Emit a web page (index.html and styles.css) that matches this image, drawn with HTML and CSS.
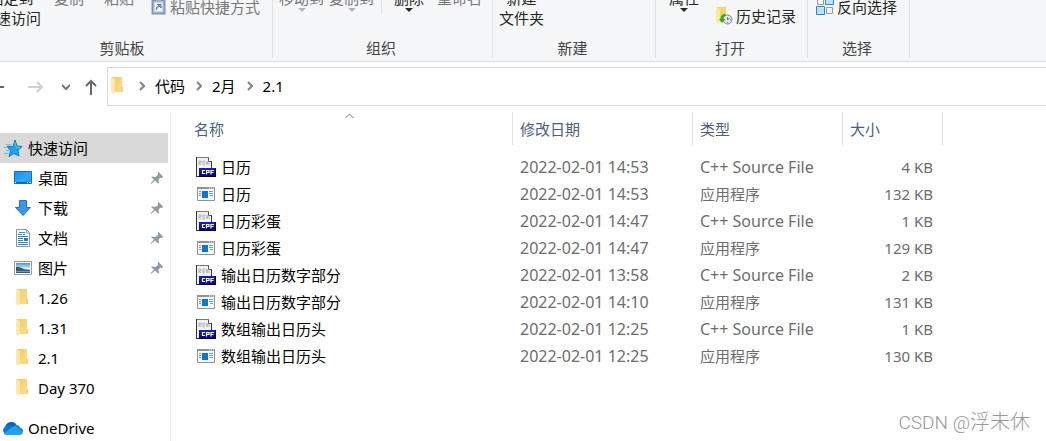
FILE: index.html
```
<!DOCTYPE html>
<html lang="zh-CN">
<head>
<meta charset="utf-8">
<title>2.1</title>
<link rel="stylesheet" href="styles.css">
</head>
<body>
<svg class="sprite" aria-hidden="true">
  <defs>
    <linearGradient id="gold" x1="0" y1="0" x2="1" y2="1"><stop offset="0" stop-color="#efcb68"/><stop offset="1" stop-color="#ffe08a"/></linearGradient>
    <linearGradient id="blue" x1="0" y1="0" x2="1" y2="1"><stop offset="0" stop-color="#1390f4"/><stop offset=".6" stop-color="#35a5fa"/><stop offset="1" stop-color="#1593f5"/></linearGradient>
    <linearGradient id="sky" x1="0" y1="0" x2="0" y2="1"><stop offset="0" stop-color="#4b93d8"/><stop offset=".55" stop-color="#d5ecf5"/><stop offset="1" stop-color="#557f91"/></linearGradient>
    <linearGradient id="navy" x1="0" y1="0" x2="0" y2="1"><stop offset="0" stop-color="#1d1dcb"/><stop offset="1" stop-color="#000074"/></linearGradient>
  </defs>
  <symbol id="folder" viewBox="0 0 20 20"><path d="M4 1h10v10h1v5H4z" fill="url(#gold)"/><path d="M3 1l4 2v12l-1 3-3-2z" fill="#ffe9a9"/><path d="M14 11v5" stroke="#eec763"/></symbol>
  <symbol id="cpp" viewBox="0 0 20 20"><path d="M0 0h13l3 4v15H0z" fill="#f2f2f2"/><path d="M0 .5h13" stroke="#777"/><path d="M.5 0v20M0 19.500h4" stroke="#333" fill="none"/><path d="M12.500 1v3.500H16" fill="#fff" stroke="#555"/><path d="M15.500 5v6" stroke="#333"/><path d="M3 8V4h2v2H3l2 2M9 4H7v4h2M7 6h2M10 4l1 4 1-4M13 5v3" fill="none" stroke="#b5b5b5"/><path d="M3 11h17v9H3z" fill="url(#navy)"/><path d="M3 19.500h16.500V11" fill="none" stroke="#000039"/><path d="M9 13.500H6.500v3H9M10.500 17.500v-4H13v2h-2.500M15 17.500v-4h3M15 15.500h2.500" fill="none" stroke="#fff" stroke-width="1.200"/></symbol>
  <symbol id="app" viewBox="0 0 20 20"><path d="M1.500 3.500h17v13h-17z" fill="#f7f7f7" stroke="#8c949a"/><path d="M1 3h18v2H1z" fill="#8c949a"/><path d="M13 4h1M15 4h1M17 4h1" stroke="#fff"/><path d="M6 7h6v7H6z" fill="#0078d7"/><path d="M3 7.500h2M3 9.500h2M3 11.500h2M13 7.500h4M13 9.500h4M14 11.500h3" stroke="#8d969c"/></symbol>
  <symbol id="star" viewBox="0 0 20 20"><path d="M12 2l2 6 5 .5-4 4 1 5.500-5-2.500-5 3 1.500-6-3.500-4h6z" fill="#1ba4f1" stroke="#1477bd"/><path d="M3 6.500h5M1 9.500h4M3 12.500h3M1 15.500h4" stroke="#68b9ea"/><path d="M12 4l1 5 4 .5" fill="none" stroke="#54c6ff"/></symbol>
  <symbol id="desktop" viewBox="0 0 20 20"><path d="M1.500 3.500h17v12h-17z" fill="url(#blue)" stroke="#0872c4"/><path d="M2 14.500h16" stroke="#0967ae"/><path d="M2 14.500h1M14 14.500h1M16 14.500h2" stroke="#fff"/></symbol>
  <symbol id="download" viewBox="0 0 20 20"><path d="M6.500 2.500h7v7h4L10 17.500 2.500 9.500h4z" fill="#3b98e9" stroke="#2673bd"/></symbol>
  <symbol id="document" viewBox="0 0 20 20"><path d="M3.500 1.500h10l3 3v14h-13z" fill="#fff" stroke="#8b969e"/><path d="M13.500 2v3h3" fill="none" stroke="#8b969e"/><path d="M6 4.500h6M5 6.500h4M10 6.500h2" stroke="#2794df"/><path d="M5 8.500h10M5 10.500h5M5 12.500h5M5 14.500h10M5 16.500h10" stroke="#2c83c5"/><path d="M11 10h4v3h-4z" fill="#47738f"/></symbol>
  <symbol id="picture" viewBox="0 0 20 20"><path d="M1.500 3.500h17v13h-17z" fill="#fff" stroke="#92999e"/><path d="M3 5h14v10H3z" fill="url(#sky)"/><path d="M3 9c4-1 6 3 14 3v3H3z" fill="#365f62"/><path d="M3 13.500h14" stroke="#68a0c5"/></symbol>
  <symbol id="cloud" viewBox="0 0 20 20"><path d="M2 9c1-3 3-5 6-5 3-.3 5 1 6 4l-5 5z" fill="#0a64b5"/><path d="M5 8c3-1 4 0 6 2l-8 6C-1 15-1 9 4 8z" fill="#0a78d0"/><path d="M10 9c3-3 6-2 7 1 5 1 3 7 0 7H4c-2 0-3-1-3-2z" fill="#25a1e9"/><path d="M12 8c2-2 5 0 5 2 2 0 3 2 3 4z" fill="#1683d5"/></symbol>
  <symbol id="pin" viewBox="0 0 14 14"><path d="M8.500 1L13 5.500 12 7l-2-.3-1.500 2L9 12l-1 .5-3-3L1 13l-.5-.5L4 8.500l-2.500-2V5.500L5.500 6l2.500-2V1z" fill="#8f9aa3"/></symbol>
</svg>

<header class="ribbon">
  <section class="group group-clipboard">
    <div class="tools">
      <button class="big pin-quick">固定到<br>快速访问</button>
      <button class="big muted copy">复制<br>&nbsp;</button>
      <button class="big muted paste">粘贴<br>&nbsp;</button>
      <button class="small muted high shortcut"><svg class="icon-16" viewBox="0 0 16 18"><path d="M1.500 2.500h12v13h-12z" fill="#c5d3e8" stroke="#8496b8" stroke-width="2"/><path d="M5 0h5v3H5z" fill="#9eafc9"/><path d="M4 5h7v8H4z" fill="#f5f9ff"/><path d="M5.500 12c-.5-3 1-4 3-4M6.500 6.500H10V10z" fill="#526e9b" fill-opacity=".4" stroke="#526e9b"/></svg>粘贴快捷方式</button>
    </div>
    <h2>剪贴板</h2>
  </section>
  <section class="group group-organize">
    <div class="tools">
      <button class="big muted">移动到<br><i class="caret"></i></button>
      <button class="big muted">复制到<br><i class="caret"></i></button>
      <span class="divider"></span>
      <button class="big delete">删除<br><i class="caret"></i></button>
      <button class="big muted rename">重命名<br>&nbsp;</button>
    </div>
    <h2>组织</h2>
  </section>
  <section class="group group-new">
    <div class="tools"><button class="big">新建<br>文件夹</button></div>
    <h2>新建</h2>
  </section>
  <section class="group group-open">
    <div class="tools">
      <button class="big">属性<br><i class="caret"></i></button>
      <button class="small history"><svg class="icon-18" viewBox="0 0 18 18"><path d="M1 0h10v15H3z" fill="#f7d474"/><path d="M1 0l4 2v12l-1 3-3-2z" fill="#ffe7a2"/><circle cx="12.500" cy="12.500" r="4.500" fill="#e5e7e8" stroke="#858b8d"/><path d="M12.500 10v3l2-2M9.500 13h1M12.500 15v1M15 13h1" fill="none" stroke="#777"/><path d="M10.500 7C7 7 5.500 9 5.500 12H4l3 4 3-4H8c0-2 1-3 3-3z" fill="#2fac28"/></svg>历史记录</button>
    </div>
    <h2>打开</h2>
  </section>
  <section class="group group-select">
    <div class="tools"><button class="small high"><svg class="icon-18" viewBox="0 0 18 18"><path d="M1.500 1.500h6v5h-6zM10.500 9.500h6v6h-6z" fill="#f5f5f5" stroke="#999"/><path d="M9.500-.5h8v7h-8zM.5 8.500h8v8h-8z" fill="#b9e4ff" stroke="#2589d5"/></svg>反向选择</button></div>
    <h2>选择</h2>
  </section>
</header>

<nav class="address">
  <div class="history-nav">
    <button aria-label="后退"><svg viewBox="0 0 16 16"><path d="M1 8h15M8 2L2 8l6 6" stroke="#666"/></svg></button>
    <button aria-label="前进" disabled><svg viewBox="0 0 16 16"><path d="M0 8h14M9 3l5 5-5 5" stroke="#d0d0d0"/></svg></button>
    <button aria-label="最近" class="recent"><svg viewBox="0 0 8 16"><path d="M0 6l4 4 4-4" stroke="#777"/></svg></button>
    <button aria-label="向上" class="up"><svg viewBox="0 0 12 16"><path d="M6 16V2M1 7l5-5 5 5" stroke="#686868"/></svg></button>
  </div>
  <div class="crumbs">
    <svg class="icon-20"><use href="#folder"/></svg>
    <svg class="chevron" viewBox="0 0 6 10"><path d="M1 1l4 4-4 4"/></svg><a href="#">代码</a>
    <svg class="chevron" viewBox="0 0 6 10"><path d="M1 1l4 4-4 4"/></svg><a href="#">2月</a>
    <svg class="chevron" viewBox="0 0 6 10"><path d="M1 1l4 4-4 4"/></svg><a href="#">2.1</a>
  </div>
</nav>

<div class="body">
  <aside class="tree">
    <a href="#" class="root selected"><svg class="icon-20"><use href="#star"/></svg>快速访问</a>
    <a href="#"><svg class="icon-20"><use href="#desktop"/></svg>桌面<svg class="pin"><use href="#pin"/></svg></a>
    <a href="#"><svg class="icon-20"><use href="#download"/></svg>下载<svg class="pin"><use href="#pin"/></svg></a>
    <a href="#"><svg class="icon-20"><use href="#document"/></svg>文档<svg class="pin"><use href="#pin"/></svg></a>
    <a href="#"><svg class="icon-20"><use href="#picture"/></svg>图片<svg class="pin"><use href="#pin"/></svg></a>
    <a href="#"><svg class="icon-20"><use href="#folder"/></svg>1.26</a>
    <a href="#"><svg class="icon-20"><use href="#folder"/></svg>1.31</a>
    <a href="#"><svg class="icon-20"><use href="#folder"/></svg>2.1</a>
    <a href="#"><svg class="icon-20"><use href="#folder"/></svg>Day 370</a>
    <a href="#" class="root cloud"><svg class="icon-20"><use href="#cloud"/></svg>OneDrive</a>
  </aside>
  <main class="files">
    <table>
      <colgroup><col class="col-name"><col class="col-date"><col class="col-type"><col class="col-size"></colgroup>
      <thead><tr><th>名称<svg class="sort" viewBox="0 0 10 6"><path d="M1 5l4-4 4 4"/></svg></th><th>修改日期</th><th>类型</th><th>大小</th></tr></thead>
      <tbody>
        <tr><td><svg class="icon-20"><use href="#cpp"/></svg>日历</td><td class="wide">2022-02-01 14:53</td><td class="wide">C++ Source File</td><td>4 KB</td></tr>
        <tr><td><svg class="icon-20"><use href="#app"/></svg>日历</td><td class="wide">2022-02-01 14:53</td><td>应用程序</td><td>132 KB</td></tr>
        <tr><td><svg class="icon-20"><use href="#cpp"/></svg>日历彩蛋</td><td class="wide">2022-02-01 14:47</td><td class="wide">C++ Source File</td><td>1 KB</td></tr>
        <tr><td><svg class="icon-20"><use href="#app"/></svg>日历彩蛋</td><td class="wide">2022-02-01 14:47</td><td>应用程序</td><td>129 KB</td></tr>
        <tr><td><svg class="icon-20"><use href="#cpp"/></svg>输出日历数字部分</td><td class="wide">2022-02-01 13:58</td><td class="wide">C++ Source File</td><td>2 KB</td></tr>
        <tr><td><svg class="icon-20"><use href="#app"/></svg>输出日历数字部分</td><td class="wide">2022-02-01 14:10</td><td>应用程序</td><td>131 KB</td></tr>
        <tr><td><svg class="icon-20"><use href="#cpp"/></svg>数组输出日历头</td><td class="wide">2022-02-01 12:25</td><td class="wide">C++ Source File</td><td>1 KB</td></tr>
        <tr><td><svg class="icon-20"><use href="#app"/></svg>数组输出日历头</td><td class="wide">2022-02-01 12:25</td><td>应用程序</td><td>130 KB</td></tr>
      </tbody>
    </table>
    <p class="watermark">CSDN @<span>浮未休</span></p>
  </main>
</div>
</body>
</html>
```
FILE: styles.css
```
* { box-sizing: border-box; }
body {
  margin: 0;
  min-height: 100vh;
  display: flex;
  flex-direction: column;
  overflow: hidden;
  background: #fff;
  color: #000;
  font: 15px/20px "Noto Sans", "Noto Sans CJK SC", sans-serif;
}
button { padding: 0; border: 0; background: none; color: inherit; font: inherit; white-space: nowrap; }
a { color: inherit; text-decoration: none; }
svg { flex: none; }
.sprite { position: absolute; width: 0; height: 0; }
.icon-16 { width: 16px; height: 18px; }
.icon-18 { width: 18px; height: 18px; }
.icon-20 { width: 20px; height: 20px; }

.ribbon {
  display: flex;
  height: 62px;
  overflow: hidden;
  background: #f5f6f7;
  border-bottom: 1px solid #dadbdc;
  color: #262626;
}
.group {
  display: flex;
  flex-direction: column;
  flex: none;
  margin-bottom: 3px;
  border-right: 1px solid #e2e3e4;
}
.group h2 {
  margin: 0;
  padding-right: 3px;
  font-size: 15px;
  font-weight: 400;
  text-align: center;
  color: #454545;
}
.tools { display: flex; align-items: flex-end; height: 38px; padding-left: 6px; }
.big { line-height: 20px; padding-bottom: 10px; }
.muted { color: #777; }
.small { display: flex; align-items: center; gap: 3px; padding-bottom: 12px; }
.high { padding-bottom: 21px; }
.caret {
  display: inline-block;
  vertical-align: top;
  border: 4px solid transparent;
  border-top-color: #262626;
  border-bottom: 0;
}
.muted .caret { border-top-color: #b5b5b5; }
.group-clipboard { width: 301px; margin-left: -28px; }
.group-clipboard .tools { padding-left: 9px; }
.group-clipboard h2 { padding-right: 0; }
.copy { margin-left: 13px; }
.paste { margin-left: 20px; }
.shortcut { margin-left: 17px; }
.group-organize { width: 220px; }
.group-organize .tools { gap: 5px; }
.divider { width: 1px; height: 24px; margin: 0 7px 24px 2px; background: #e2e3e4; }
.rename { margin-left: 8px; }
.group-new { width: 163px; }
.group-open { width: 152px; }
.group-open .tools { padding-left: 13px; }
.history { margin-left: 16px; }
.group-select { width: 102px; }
.group-select .tools { padding-left: 8px; }

.address { display: flex; height: 44px; padding-top: 5px; }
.history-nav { display: flex; align-items: center; flex: none; width: 119px; margin-left: -12px; }
.history-nav button { display: flex; margin-right: 24px; }
.history-nav svg { width: 16px; height: 16px; fill: none; stroke-width: 2; }
.history-nav .recent { margin: 0 15px 0 -6px; }
.history-nav .recent svg { width: 8px; }
.history-nav .up { margin: 0; }
.history-nav .up svg { width: 12px; }
.crumbs {
  display: flex;
  align-items: center;
  flex: 1;
  padding-bottom: 1px;
  border: 1px solid #d9d9d9;
  border-right: 0;
}
.chevron { width: 6px; height: 10px; margin: 0 10px 0 11px; fill: none; stroke: #858585; stroke-width: 2; }

.body { display: flex; flex: 1; padding-top: 6px; }
.tree {
  display: flex;
  flex-direction: column;
  flex: none;
  width: 171px;
  padding: 21px 2px 0 0;
  border-right: 1px solid #f1f1f1;
}
.tree a { display: flex; align-items: center; gap: 5px; height: 30px; padding: 0 4px 0 13px; }
.tree .root { padding-left: 3px; }
.tree .selected { background: #d9d9d9; }
.tree .cloud { margin-top: 10px; }
.pin { width: 14px; height: 14px; margin-left: auto; }

.files { display: flex; flex-direction: column; flex: 1; padding-left: 15px; }
table { table-layout: fixed; width: 757px; border-collapse: separate; border-spacing: 0; }
.col-name { width: 327px; }
.col-date { width: 180px; }
.col-type { width: 150px; }
.col-size { width: 100px; }
th {
  height: 33px;
  padding: 0 7px;
  border-right: 1px solid #e2e2e2;
  color: #4c607a;
  font-weight: 400;
  text-align: left;
}
th:first-child { position: relative; padding-left: 8px; }
.sort { position: absolute; left: 158px; top: 1px; width: 11px; height: 6px; fill: none; stroke: #777; }
td { height: 27px; padding: 0 7px; color: #6d6d6d; white-space: nowrap; }
td.wide { font-size: 16px; }
td:first-child { display: flex; align-items: center; gap: 5px; padding-left: 10px; color: #000; }
td:last-child { padding-right: 10px; text-align: right; }
tbody::before { content: ""; display: block; height: 8px; }
.watermark {
  margin: auto 16px 8px auto;
  color: #999;
  font: 300 19px/24px Roboto, "Noto Sans CJK SC", sans-serif;
}
.watermark span { font-size: 20px; }
```
